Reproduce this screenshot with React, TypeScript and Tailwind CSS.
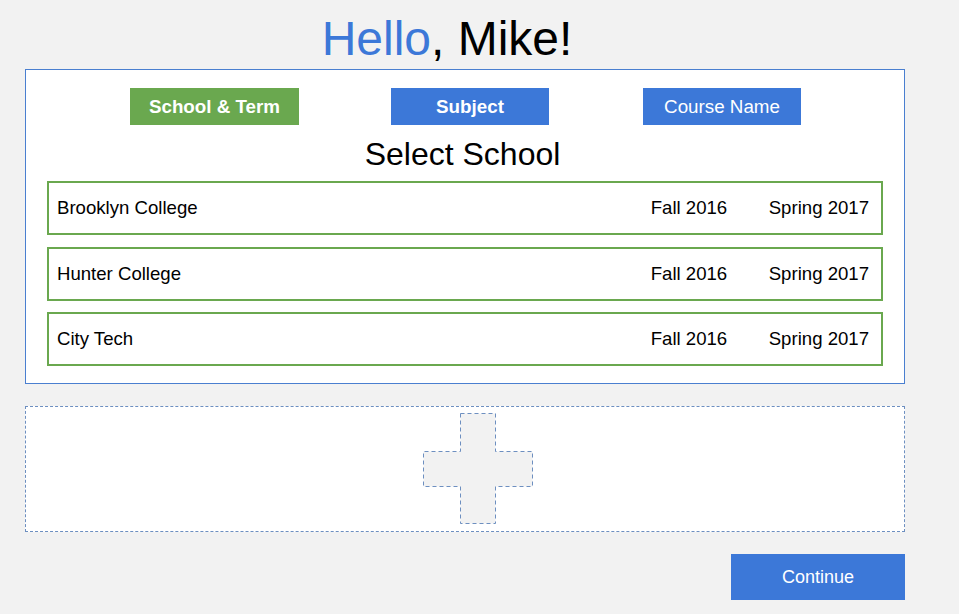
import React from "react";

const rows = ["Brooklyn College", "Hunter College", "City Tech"];

export default function App() {
  return (
    <div
      className="w-[959px] h-[614px] bg-[#f2f2f2] overflow-hidden"
      style={{ fontFamily: '"Liberation Sans", Arial, sans-serif' }}
    >
      <div className="w-[880px] ml-[25px]">
        <h1 className="h-[69px] pt-[11px] pr-[36px] text-center text-[48px] leading-[56px] text-black">
          <span className="text-[#3c78d8]">Hello</span>, Mike!
        </h1>
        <div className="h-[315px] bg-white border border-[#4a7fd0] pt-[18px] px-[21px]">
          <div className="flex h-[37px]">
            <div className="ml-[83px] w-[169px] h-[37px] pt-[2px] bg-[#6aa84f] text-white font-bold text-[18.8px] flex items-center justify-center">
              School &amp; Term
            </div>
            <div className="ml-[92px] w-[158px] h-[37px] pt-[2px] bg-[#3c78d8] text-white font-bold text-[18.8px] flex items-center justify-center">
              Subject
            </div>
            <div className="ml-[94px] w-[158px] h-[37px] pt-[2px] bg-[#3c78d8] text-white text-[18.8px] flex items-center justify-center">
              Course Name
            </div>
          </div>
          <div className="h-[56px] pt-[11px] pr-[5px] text-center text-[32px] leading-[36px] text-black">
            Select School
          </div>
          <div className="flex flex-col gap-[11.5px]">
            {rows.map((r) => (
              <div
                key={r}
                className="h-[54px] border-2 border-[#6aa84f] flex items-center pl-[8px] pr-[12px] text-[18.6px] text-black"
              >
                <span className="flex-1">{r}</span>
                <span className="w-[118px]">Fall 2016</span>
                <span>Spring 2017</span>
              </div>
            ))}
          </div>
        </div>
        <div className="mt-[22px] h-[126px] bg-white border border-dashed border-[#6d8fc0] flex items-center justify-center">
          <svg width="112" height="112" viewBox="0 0 112 112" className="ml-[28px]">
            <path
              d="M37.5 0.5 H72.5 V38.5 H109.5 V73.5 H72.5 V110.5 H37.5 V73.5 H0.5 V38.5 H37.5 Z"
              fill="#f2f2f2"
              stroke="#6d8fc0"
              strokeWidth="1"
              strokeDasharray="4 3"
            />
          </svg>
        </div>
        <div className="flex justify-end mt-[22px]">
          <button className="w-[174px] h-[46px] bg-[#3c78d8] text-white text-[18px] flex items-center justify-center">
            Continue
          </button>
        </div>
      </div>
    </div>
  );
}
